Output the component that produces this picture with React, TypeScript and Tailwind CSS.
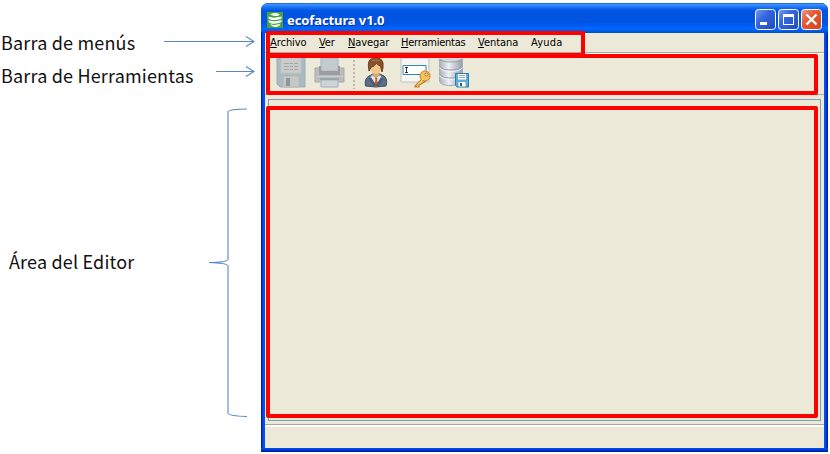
import React from 'react';

const menus = [
  { key: 'A', rest: 'rchivo', box: 'w-[49px]', track: 'tracking-[-0.05px]' },
  { key: 'V', rest: 'er', box: 'w-[29px]', track: 'tracking-[-0.1px]' },
  { key: 'N', rest: 'avegar', box: 'w-[53px]', track: 'tracking-[-0.1px]' },
  { key: 'H', rest: 'erramientas', box: 'w-[77px]', track: 'tracking-[-0.25px]' },
  { key: 'V', rest: 'entana', box: 'w-[53px]', track: 'tracking-[-0.05px]' },
  { key: '', rest: 'Ayuda', box: 'w-[40px]', track: 'tracking-[0.2px]' },
];

function Arrow({ length }: { length: number }) {
  return (
    <svg width={length} height="12" viewBox={`0 0 ${length} 12`} fill="none" stroke="#5b87c5" strokeWidth="1.1">
      <path d={`M0 5.500H${length - 1}M${length - 9} .5L${length - 1} 5.500L${length - 9} 10.500`} />
    </svg>
  );
}

function Brace() {
  return (
    <svg width="39" height="310" viewBox="0 0 39 310" fill="none" stroke="#5b87c5">
      <path strokeWidth="1.2" d="M38 1Q20 1 19 4M19 151Q18.500 154.500 0 154.500Q18.500 155 19 158M19 305Q19.500 308 38 308.500" />
      <path stroke="#a2bddf" strokeWidth="2" d="M19 3V152M19 157V306" />
    </svg>
  );
}

function Logo() {
  return (
    <svg width="16" height="16" viewBox="0 0 16 16">
      <path fill="#4aa043" d="M0 0H16V16H0Z" />
      <path d="M3 2.500Q7.500 -.3 12 2Q13.500 3.500 10 4Q6 4 3 2.500Z" fill="#fff" />
      <path d="M1.500 4.500Q6 6.800 14.500 4.500V6.500Q10 8.500 6 8T1.500 6.300Z" fill="#fff" />
      <path d="M1.500 8Q6 10.600 14.500 8V10Q10 12.200 6 11.700T2 10Z" fill="#fff" />
      <path d="M3 12Q7 14 13.500 11.800Q12 15 8.500 15T3 12Z" fill="#fff" />
    </svg>
  );
}

function SaveIcon() {
  return (
    <svg width="30" height="30" viewBox="0 0 30 30">
      <path d="M1 0H29V29H4L1 26Z" fill="#a9bac3" stroke="#9aafba" />
      <path d="M5 0H25V15H5Z" fill="#cbcdca" stroke="#bdc3c3" />
      <path d="M8 5.500H22M8 8.500H22M8 11.500H22" stroke="#a5a7a6" strokeDasharray="5 1 3 1" />
      <path d="M7 18H23V29H7Z" fill="#c6c8c6" stroke="#b3b8b9" />
      <path d="M10 20H14V28H10Z" fill="#8f969a" />
    </svg>
  );
}

function PrinterIcon() {
  return (
    <svg width="31" height="30" viewBox="0 0 31 30">
      <path d="M1 10H6V14H25V10H30V24H1Z" fill="#bbbcbc" stroke="#a9aaab" />
      <path d="M7 0H24V13H7Z" fill="#c3cbd0" stroke="#a6b4bf" />
      <path d="M5 8H7V13H24V8H26V17H5Z" fill="#9b9da0" />
      <path d="M2 18.500H29" stroke="#cccccb" />
      <path d="M7 22H24V29H7Z" fill="#ced4d7" stroke="#9fb3c0" />
      <path d="M6 21H25" stroke="#959da2" strokeWidth="1.500" />
    </svg>
  );
}

function PersonIcon() {
  return (
    <svg width="24" height="30" viewBox="0 0 24 30">
      <path d="M1.500 28Q0 21 5 18L9 16H16L20 18Q24 21 22 28Q12 30 1.500 28Z" fill="#5d6f86" stroke="#40526a" />
      <path d="M8 17L12 20L16 17L18 20L12 28L6 20Z" fill="#dbe6ee" />
      <path d="M11 20H13.500L13 22L14.500 26L12 29L10 26L11.500 22Z" fill="#d05e18" />
      <path d="M8.500 13H15.500V17L12 20L8.500 17Z" fill="#dba968" />
      <ellipse cx="12" cy="9.500" rx="5.500" ry="6.500" fill="#f2c68c" />
      <path d="M5 13Q2.500 0 9.500 .5Q17.500 -1.500 19 5Q19.500 10 18 14L16.500 8Q14 8 12.500 5Q11 8 7 9.500Z" fill="#87522d" stroke="#70401f" />
      <path d="M8 2.500Q11 1 15 2.500" stroke="#b57d48" fill="none" />
      <path d="M6 20L11 28M18 20L13 28" stroke="#465a74" strokeWidth="2.500" />
    </svg>
  );
}

function FieldKeyIcon() {
  return (
    <svg width="32" height="30" viewBox="0 0 32 30">
      <path d="M1 0H29V24H1Z" fill="#f5f6f4" stroke="#c0c1bd" />
      <path d="M3 7.500H26V16.500H3Z" fill="#fff" stroke="#3485b5" />
      <path d="M5 9.500H8M6.500 9.500V14.500M5 14.500H8" stroke="#333" />
      <path d="M23 20L15 28V29H19V27L21 26L26 23" fill="#efc05a" stroke="#c77b17" strokeWidth="1.2" />
      <circle cx="25" cy="18" r="5" fill="#f6c35d" stroke="#ce8120" />
      <circle cx="26.500" cy="16.500" r="1.500" fill="#fff7df" stroke="#b66b18" />
      <path d="M23 21L17 27" stroke="#ffe69a" />
    </svg>
  );
}

function DatabaseIcon() {
  return (
    <svg width="32" height="30" viewBox="0 0 32 30">
      <defs>
        <linearGradient id="drum"><stop stopColor="#a8b0b9" /><stop offset=".4" stopColor="#eff1f3" /><stop offset="1" stopColor="#929ca8" /></linearGradient>
      </defs>
      <path d="M1.500 1V24Q4 27.500 12 27.500Q21 27.500 24.500 24V1Z" fill="url(#drum)" stroke="#a7afb8" />
      <path d="M1.500 0Q4 3 13 3Q22 3 24.500 0Z" fill="#d3d8dd" />
      <path d="M1.500 1Q4 4 13 4Q22 4 24.500 1M1.500 8Q4 12 13 12Q22 12 24.500 8M1.500 16Q4 20 13 20Q22 20 24.500 16" fill="none" stroke="#99a2ac" />
      <path d="M1.500 9.500Q4 13.500 13 13.500Q22 13.500 24.500 9.500M1.500 17.500Q4 21.500 13 21.500Q22 21.500 24.500 17.500" fill="none" stroke="#f1f4f6" />
      <path d="M17.500 15.500H30.500V29H19L17.500 27.500Z" fill="#5faed8" stroke="#237eb2" />
      <path d="M20 16H28V21.500H20ZM20.500 24H27.500V28.500H20.500Z" fill="#fff" />
      <path d="M21 17.500H27M21 19.500H27" stroke="#9ba9b1" />
      <path d="M22 25H24V28H22Z" fill="#315d77" />
    </svg>
  );
}

function WindowButton({ kind }: { kind: 'min' | 'max' | 'close' }) {
  return (
    <svg width="21" height="21" viewBox="0 0 21 21">
      <defs>
        <linearGradient id={`btn-${kind}`} x1="0" y1="0" x2="1" y2="1">
          <stop stopColor={kind === 'close' ? '#ef9b80' : '#779dee'} />
          <stop offset=".4" stopColor={kind === 'close' ? '#e35b35' : '#3466dd'} />
          <stop offset="1" stopColor={kind === 'close' ? '#d0461c' : '#2149bf'} />
        </linearGradient>
      </defs>
      <rect x=".5" y=".5" width="20" height="20" rx="3" fill={`url(#btn-${kind})`} stroke="#fff" />
      {kind === 'min' && <path d="M5 13H12V16H5Z" fill="#fff" />}
      {kind === 'max' && <path fillRule="evenodd" d="M5 5H16V16H5ZM6 8V15H15V8Z" fill="#fff" />}
      {kind === 'close' && <path d="M5.500 5.500L15.500 15.500M15.500 5.500L5.500 15.500" stroke="#fff" strokeWidth="2.300" />}
    </svg>
  );
}

export default function App() {
  return (
    <div className="relative flex h-[454px] w-[830px] overflow-hidden bg-white">
      <aside className="w-[261px] shrink-0 whitespace-nowrap font-['Noto_Sans_CJK_SC',sans-serif] text-[18px] leading-[28px] text-[#111]">
        <div className="mt-[28px] flex h-[28px] items-start pl-[1px]">
          <span className="w-[163px] tracking-[0.18px]">Barra de menús</span>
          <div className="pt-[8px]"><Arrow length={91} /></div>
        </div>
        <div className="mt-[5px] flex h-[28px] items-start pl-[1px]">
          <span className="w-[215px] tracking-[0.18px]">Barra de Herramientas</span>
          <div className="pt-[5px]"><Arrow length={39} /></div>
        </div>
        <div className="mt-[19px] flex h-[310px] items-center pl-[9px]">
          <span className="w-[200px] pb-[5px] tracking-[0.18px]">Área del Editor</span>
          <Brace />
        </div>
      </aside>
      <main className="mt-[3px] flex h-[449px] w-[567px] flex-col overflow-hidden rounded-t-[7px] bg-[linear-gradient(90deg,#001aa6_0,#0023c4_1px,#0053f0_2px,#0053f0_564px,#0029c3_566px,#001590_567px)]">
        <header className="flex h-[30px] shrink-0 items-center bg-[linear-gradient(#1558c9_0%,#3c93ff_5%,#1b75f8_13%,#0054df_26%,#0054e5_65%,#0067ff_88%,#0049c9_100%)] pl-[6px] pr-[6px] pt-[3px]">
          <Logo />
          <span className="ml-[4px] whitespace-nowrap font-['Noto_Sans',sans-serif] text-[13px] font-bold leading-[18px] tracking-[-0.1px] text-white [text-shadow:1px_1px_#0c328b]">ecofactura v1.0</span>
          <div className="ml-auto flex gap-[2px]">
            <WindowButton kind="min" /><WindowButton kind="max" /><WindowButton kind="close" />
          </div>
        </header>
        <section className="mx-[4px] flex min-h-0 flex-1 flex-col bg-[#ece9d8]">
          <nav className="flex h-[20px] shrink-0 border-b border-[#aca899] pl-[5px] pt-[2px] font-['DejaVu_Sans_Condensed','DejaVu_Sans',sans-serif] text-[11px] leading-[15px] text-black [font-stretch:condensed]">
            {menus.map((m, i) => (
              <span key={i} className={`${m.box} ${m.track} shrink-0 whitespace-nowrap`}><span className="underline underline-offset-1">{m.key}</span>{m.rest}</span>
            ))}
          </nav>
          <div className="flex h-[42px] shrink-0 items-start border-b border-t border-b-[#aca899] border-t-white pl-[11px] pt-[4px]">
            <SaveIcon />
            <div className="ml-[8px]"><PrinterIcon /></div>
            <div className="ml-[8px] h-[31px] w-[2px] bg-[repeating-linear-gradient(#ece9d8_0,#ece9d8_2px,#bdb9aa_2px,#bdb9aa_4px)]" />
            <div className="ml-[9px]"><PersonIcon /></div>
            <div className="ml-[12px]"><FieldKeyIcon /></div>
            <div className="ml-[6px]"><DatabaseIcon /></div>
          </div>
          <div className="mx-[3px] mt-[4px] h-[322px] w-[553px] shrink-0 border border-[#7f9db9]" />
          <footer className="mt-[3px] flex-1 border-t border-[#aca899]"><div className="h-[2px] bg-[#fffef8]" /></footer>
        </section>
        <div className="h-[4px] shrink-0 bg-[linear-gradient(#0054ef,#0037d4_50%,#001590)]" />
      </main>
      <div className="absolute left-[266px] top-[31px] h-[26px] w-[319px] rounded-[2px] border-4 border-[#ff0000]" />
      <div className="absolute left-[266px] top-[54px] h-[41px] w-[552px] rounded-[2px] border-4 border-[#ff0000]" />
      <div className="absolute left-[266px] top-[106px] h-[312px] w-[552px] rounded-[2px] border-4 border-[#ff0000]" />
    </div>
  );
}
